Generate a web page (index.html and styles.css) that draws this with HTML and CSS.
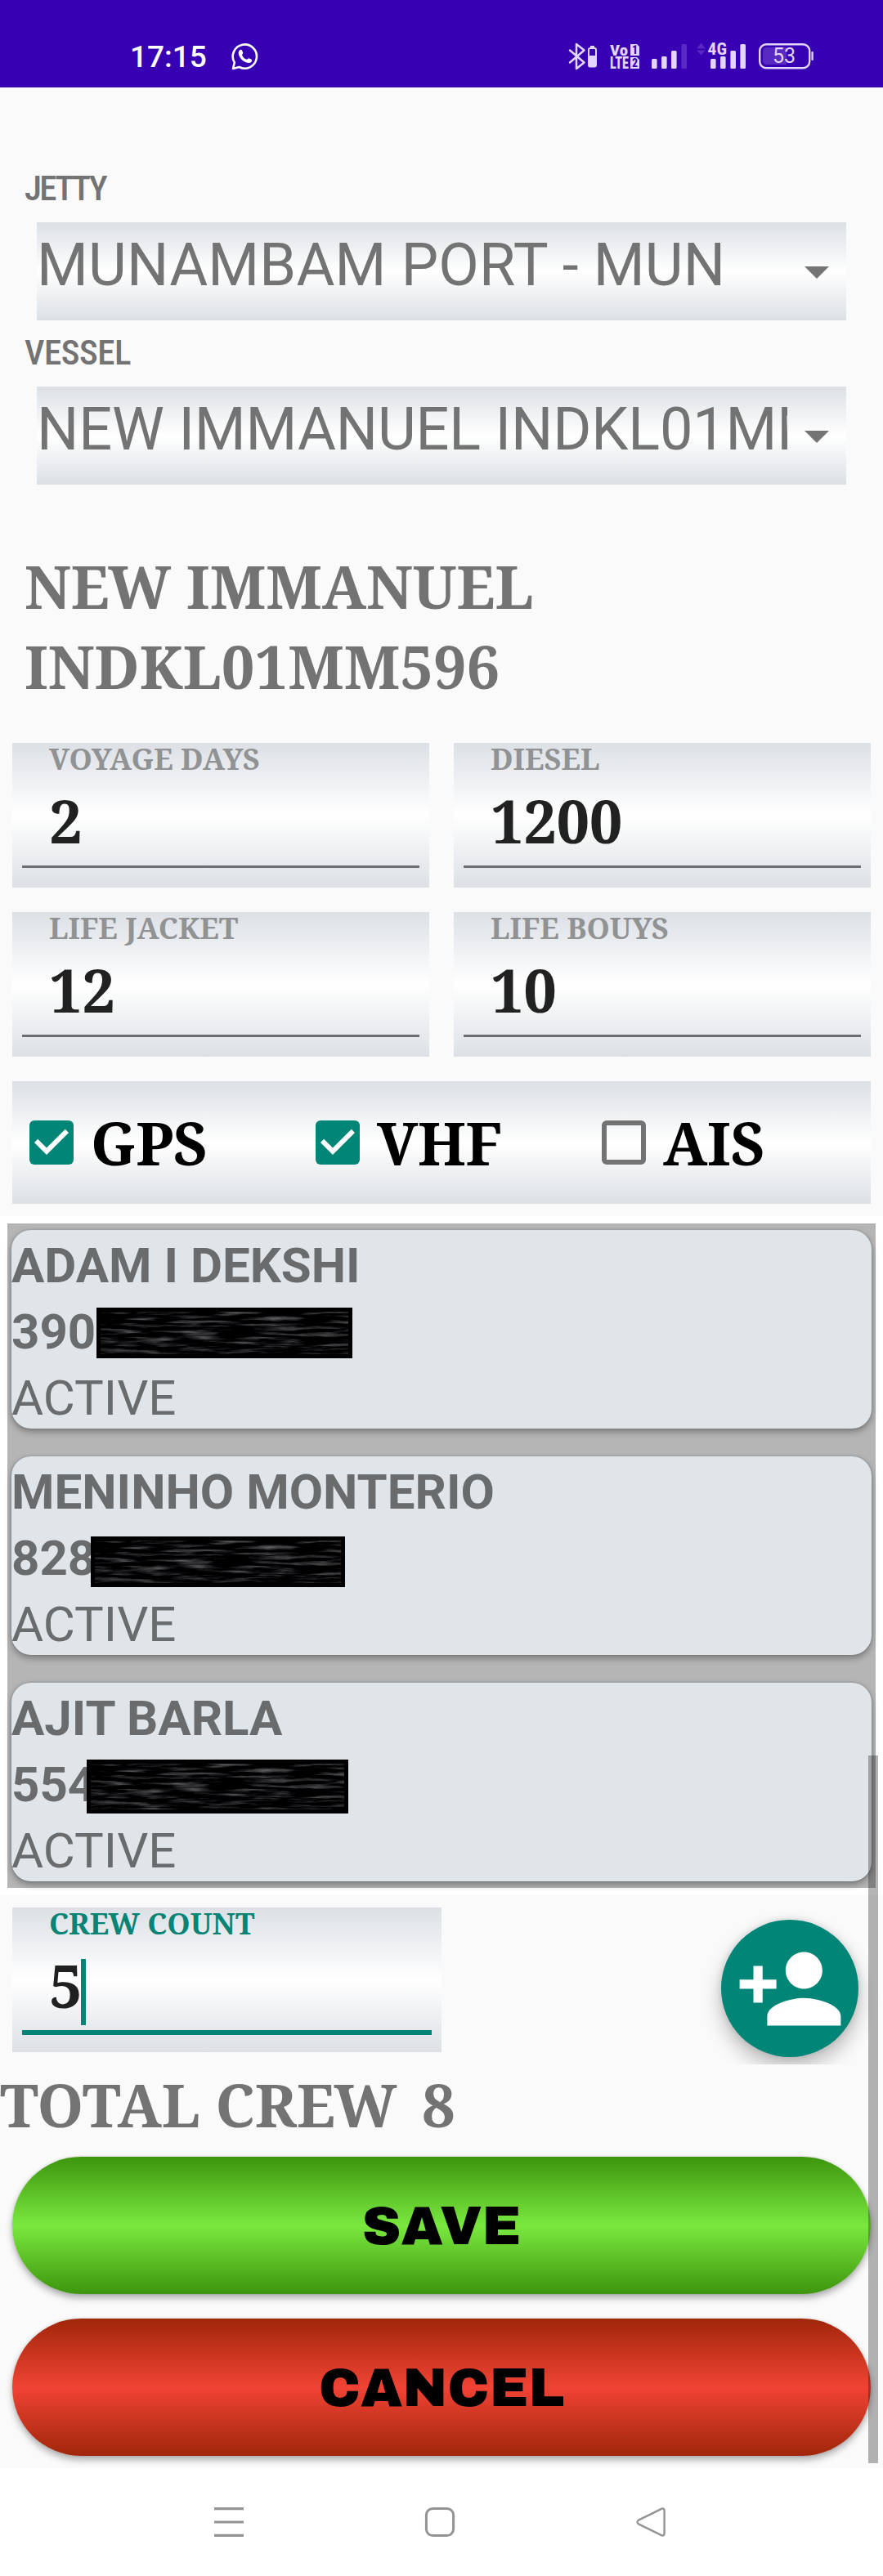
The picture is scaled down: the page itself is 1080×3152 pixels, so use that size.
FILE: index.html
```html
<!DOCTYPE html>
<html lang="en">
<head>
<meta charset="utf-8">
<title>Vessel departure</title>
<link rel="stylesheet" href="styles.css">
</head>
<body>
<header class="status">
  <div class="status-left">
    <span class="clock">17:15</span>
    <svg class="whatsapp" width="34" height="34" viewBox="0 0 34 34">
      <path d="M2 32 L3.8 24.5 A14.6 14.6 0 1 1 9.6 30 Z" fill="none" stroke="#fff" stroke-width="2.6" stroke-linejoin="round"/>
      <path d="M10.2 9.3 C11 8.6 12.6 8.6 13 9.6 L14.2 12.6 C14.5 13.4 13.2 14.6 13 15.2 C14 17.8 16 19.8 18.8 20.8 C19.6 20.6 20.6 19 21.4 19.2 L24.6 20.8 C25.4 21.2 25.2 22.6 24.6 23.4 C23 25.4 20.4 25.4 17.6 24.2 C13.6 22.6 10.6 19.4 9.2 15.8 C8.4 13.4 8.6 10.8 10.2 9.3 Z" fill="#fff"/>
    </svg>
  </div>
  <svg class="status-icons" width="306" height="40" viewBox="692 50 306 40" fill="#e3d5fb">
    <path d="M697 61.5 L714.5 76.5 L705 84 V54 L714.5 61.5 L697 76.5" fill="none" stroke="#e3d5fb" stroke-width="2.5" stroke-linejoin="round" stroke-linecap="round"/>
    <rect x="722" y="56" width="5" height="2"/>
    <rect x="720" y="59" width="9" height="22.5" rx="2" fill="none" stroke="#e3d5fb" stroke-width="2"/>
    <rect x="720" y="68" width="9" height="13"/>
    <g class="volte">
      <text x="746" y="67.6" font-size="19" textLength="22" lengthAdjust="spacingAndGlyphs">Vo</text>
      <text x="746" y="84" font-size="19.5" textLength="23" lengthAdjust="spacingAndGlyphs">LTE</text>
      <path d="M771 54 h8 l3 3 v11 h-11 z M771 70 h8 l3 3 v11 h-11 z"/>
      <text x="776.5" y="66" font-size="14" text-anchor="middle" fill="#3700b3">1</text>
      <text x="776.5" y="82" font-size="14" text-anchor="middle" fill="#3700b3">2</text>
    </g>
    <rect x="797" y="72" width="6.6" height="12" rx="1.5"/>
    <rect x="809" y="69" width="6.6" height="15" rx="1.5"/>
    <rect x="821" y="62" width="6.6" height="22" rx="1.5"/>
    <rect x="833.4" y="54" width="6.6" height="30" rx="1.5" fill="#5829c3"/>
    <path d="M852 59.5 L857.5 52.5 L863 59.5 Z M852 61.5 L857.5 67.5 L863 61.5 Z" fill="#5829c3"/>
    <text class="net" x="865.5" y="67" font-size="20.5" textLength="23.5" lengthAdjust="spacingAndGlyphs">4G</text>
    <rect x="869" y="72" width="6.6" height="12" rx="1.5"/>
    <rect x="881" y="69" width="6.6" height="15" rx="1.5"/>
    <rect x="893.4" y="62" width="6.6" height="22" rx="1.5"/>
    <rect x="905.4" y="54" width="6.6" height="30" rx="1.5"/>
    <path d="M938 58 H962 V79 H938 Q933 79 933 74 V63 Q933 58 938 58 Z" fill="#5829c3"/>
    <rect x="929.2" y="54.2" width="61" height="29" rx="8" fill="none" stroke="#e3d5fb" stroke-width="2.4"/>
    <rect x="992.4" y="63" width="2.4" height="11" rx="1"/>
    <text class="pct" x="959" y="77.2" font-size="25" text-anchor="middle">53</text>
  </svg>
</header>

<main class="form">
  <label class="caption caption-jetty">JETTY</label>
  <div class="spinner">
    <span class="spinner-text">MUNAMBAM PORT - MUN</span>
    <svg class="arrow" width="30" height="15" viewBox="0 0 30 15"><path d="M0 0H30L15 15Z"/></svg>
  </div>
  <label class="caption caption-vessel">VESSEL</label>
  <div class="spinner">
    <span class="spinner-text tight">NEW IMMANUEL INDKL01MM596</span>
    <svg class="arrow" width="30" height="15" viewBox="0 0 30 15"><path d="M0 0H30L15 15Z"/></svg>
  </div>

  <h1 class="title">NEW IMMANUEL<br>INDKL01MM596</h1>

  <section class="fields">
    <div class="field"><div class="label">VOYAGE DAYS</div><div class="value">2</div></div>
    <div class="field"><div class="label">DIESEL</div><div class="value">1200</div></div>
    <div class="field"><div class="label">LIFE JACKET</div><div class="value">12</div></div>
    <div class="field"><div class="label">LIFE BOUYS</div><div class="value">10</div></div>
  </section>

  <section class="checks">
    <div class="check"><svg class="box on" viewBox="3 3 18 18"><path d="M10 17l-5-5 1.41-1.41L10 14.17l7.59-7.59L19 8l-9 9z"/></svg>GPS</div>
    <div class="check"><svg class="box on" viewBox="3 3 18 18"><path d="M10 17l-5-5 1.41-1.41L10 14.17l7.59-7.59L19 8l-9 9z"/></svg>VHF</div>
    <div class="check"><span class="box off"></span>AIS</div>
  </section>

  <section class="list">
    <article class="card">
      <div class="name">ADAM I DEKSHI</div>
      <div class="number">390<svg class="mask mask-a" width="313" height="62"><rect class="streaks" x="5" y="5" width="303" height="52"/></svg></div>
      <div>ACTIVE</div>
    </article>
    <article class="card">
      <div class="name">MENINHO MONTERIO</div>
      <div class="number">828<svg class="mask mask-b" width="311" height="62"><rect class="streaks" x="5" y="5" width="301" height="52"/></svg></div>
      <div>ACTIVE</div>
    </article>
    <article class="card">
      <div class="name">AJIT BARLA</div>
      <div class="number">554<svg class="mask mask-c" width="320" height="66"><rect class="streaks" x="5" y="5" width="310" height="56"/></svg></div>
      <div>ACTIVE</div>
    </article>
  </section>

  <section class="crew">
    <div class="field focused"><div class="label">CREW COUNT</div><div class="value">5<span class="caret"></span></div></div>
    <button class="fab" aria-label="Add crew member">
      <svg width="135" height="135" viewBox="0 0 24 24"><path fill="#fff" d="M15 12c2.21 0 4-1.79 4-4s-1.79-4-4-4-4 1.79-4 4 1.79 4 4 4zm-9-2V7H4v3H1v2h3v3h2v-3h3v-2H6zm9 4c-2.67 0-8 1.34-8 4v2h16v-2c0-2.66-5.33-4-8-4z"/></svg>
    </button>
  </section>

  <div class="total"><span class="total-label">TOTAL CREW</span><span>8</span></div>

  <div class="actions">
    <button class="btn save">SAVE</button>
    <button class="btn cancel">CANCEL</button>
  </div>
  <div class="scrollbar"></div>
</main>

<nav class="nav">
  <svg width="38" height="38" viewBox="0 0 38 38"><path d="M1 2.6H37M1 19H37M1 35.4H37" stroke-width="3.2"/></svg>
  <svg width="38" height="38" viewBox="0 0 38 38"><rect x="2.4" y="2.4" width="33.2" height="33.2" rx="8" stroke-width="3"/></svg>
  <svg width="38" height="38" viewBox="0 0 38 38"><path d="M32.5 2.6 L4 16.6 Q1 19 4 21.4 L32.5 35.4 Q35.6 36 35.6 33 V5 Q35.6 2 32.5 2.6 Z" stroke-width="2.4" stroke-linejoin="round"/></svg>
</nav>

<svg class="defs" width="0" height="0">
  <filter id="streaks" x="0" y="0" width="100%" height="100%" color-interpolation-filters="sRGB">
    <feTurbulence type="fractalNoise" baseFrequency="0.02 0.25" numOctaves="4" seed="4"/>
    <feColorMatrix values="0.9 0 0 0 -0.42  0.9 0 0 0 -0.42  0.9 0 0 0 -0.41  0 0 0 0 1"/>
  </filter>
</svg>
</body>
</html>
```
FILE: styles.css
```css
* { box-sizing: border-box; }

body {
  margin: 0;
  width: 1080px;
  background: #fff;
  font-family: Roboto, "Liberation Sans", sans-serif;
  color: #737373;
}

svg { display: block; flex: none; }

.status {
  display: flex;
  justify-content: space-between;
  height: 107px;
  padding: 50px 82px 0 159px;
  background: #3700b3;
}
.status-left { display: flex; gap: 30px; }
.clock {
  font-size: 37px;
  font-weight: 500;
  line-height: 40px;
  color: #fff;
}
.whatsapp { margin-top: 2px; }
.volte text { font-family: "Roboto Condensed", Roboto, sans-serif; font-weight: 800; }
.net { font-family: "Roboto Condensed", Roboto, sans-serif; font-weight: 700; }
.pct { font-family: Roboto, sans-serif; font-weight: 400; }

.form {
  position: relative;
  height: 2913px;
  padding-top: 99px;
  background: #fafafa;
}

.caption {
  display: block;
  height: 49px;
  padding-left: 30px;
  font-family: "Roboto Condensed", Roboto, sans-serif;
  font-size: 43px;
  font-weight: 500;
  line-height: 48px;
  letter-spacing: -0.5px;
}
.caption-jetty { letter-spacing: -2.6px; }
.caption-vessel { margin-top: 15px; }

.spinner {
  display: flex;
  justify-content: space-between;
  width: 990px;
  height: 120px;
  margin: 17px 45px 0;
  padding: 10px 21px 0 0;
  background: linear-gradient(#dce0e5, #fff 50%, #dce0e5);
}
.spinner-text {
  width: 918px;
  overflow: hidden;
  white-space: nowrap;
  font-size: 72px;
  line-height: 85px;
  letter-spacing: 0.2px;
}
.tight { letter-spacing: -0.15px; }
.arrow { margin-top: 44px; fill: #747474; }

.title, .label, .value, .check, .total {
  font-family: "Noto Serif", "DejaVu Serif Condensed", serif;
  font-weight: 700;
}

.title {
  margin: 75px 30px 0;
  font-size: 72px;
  line-height: 98px;
}

.fields {
  display: grid;
  grid-template-columns: 510px 510px;
  gap: 30px;
  margin: 45px 15px 30px;
}
.field {
  height: 177px;
  padding: 0 12px;
  background: linear-gradient(#dce0e5, #fff 50%, #dce0e5);
}
.label {
  height: 46px;
  padding-left: 33px;
  font-size: 36px;
  line-height: 40px;
  color: #919294;
}
.value {
  position: relative;
  height: 107px;
  padding-left: 33px;
  border-bottom: 3px solid #6b6d70;
  font-size: 72px;
  line-height: 98px;
  letter-spacing: -0.4px;
  color: #212121;
}

.checks {
  display: grid;
  grid-template-columns: repeat(3, 350px);
  height: 150px;
  margin: 0 15px;
  background: linear-gradient(#dce0e5, #fff 50%, #dce0e5);
}
.check {
  display: flex;
  align-items: center;
  gap: 21px;
  padding-left: 21px;
  font-size: 72px;
  line-height: 98px;
  letter-spacing: -0.3px;
  color: #000;
}
.box { width: 54px; height: 54px; border-radius: 6px; }
.on { background: #008577; fill: #fff; }
.off { border: 6px solid #737373; }

.list {
  height: 831px;
  margin-top: 15px;
  padding: 8px 5px 0;
  border: solid #fff;
  border-width: 9px;
  background: #b5b5b5;
}
.card {
  height: 243px;
  margin-bottom: 34px;
  padding-top: 3px;
  border-radius: 24px;
  background: #e0e5e9;
  box-shadow: 0 4px 8px rgba(0, 0, 0, 0.32), 0 0 3px rgba(0, 0, 0, 0.2);
  font-size: 60px;
  line-height: 81px;
  color: #696b6d;
}
.card:last-child { margin-bottom: 0; }
.name, .number { font-weight: 700; }
.number { position: relative; }
.mask { position: absolute; background: #000; }
.mask-a { left: 104px; top: 11px; }
.mask-b { left: 97px; top: 14px; }
.mask-c { left: 92px; top: 10px; }
.streaks { filter: url(#streaks); }

.crew {
  display: flex;
  justify-content: space-between;
  height: 207px;
  padding: 15px 30px 15px 15px;
  overflow: hidden;
}
.focused { width: 525px; }
.focused .label { color: #078476; }
.focused .value { height: 110px; border-bottom: 6px solid #078476; }
.caret {
  position: absolute;
  left: 72px;
  top: 17px;
  width: 6px;
  height: 81px;
  background: #078476;
}
.fab {
  display: flex;
  align-items: center;
  justify-content: center;
  width: 168px;
  height: 168px;
  margin-top: 15px;
  padding: 0;
  border: 0;
  border-radius: 50%;
  background: #008577;
  box-shadow: 0 12px 24px rgba(0, 0, 0, 0.26), 0 0 8px rgba(0, 0, 0, 0.12);
}

.total {
  display: flex;
  font-size: 72px;
  line-height: 98px;
}
.total-label { width: 516px; }

.actions {
  display: flex;
  flex-direction: column;
  gap: 30px;
  padding: 15px 15px;
  height: 396px;
  overflow: hidden;
}
.btn {
  flex: none;
  height: 168px;
  padding: 1px 0 0;
  border: 0;
  border-radius: 84px;
  font-family: "Archivo Black", Inter, sans-serif;
  font-size: 66px;
  color: #000;
  box-shadow: 0 5px 9px rgba(0, 0, 0, 0.3), 0 0 3px rgba(0, 0, 0, 0.15);
}
.save { background: linear-gradient(#3d950d, #7ae83f 50%, #3d950d); }
.cancel { background: linear-gradient(#a0260a, #f04334 50%, #a0260a); }

/* Scroll indicator floating over the form's right edge */
.scrollbar {
  position: absolute;
  right: 6px;
  top: 2041px;
  width: 12px;
  height: 866px;
  background: rgba(0, 0, 0, 0.29);
}

.nav {
  display: flex;
  align-items: flex-start;
  gap: 220px;
  height: 132px;
  padding: 47px 0 0 261px;
  fill: none;
  stroke: #939393;
}

.defs { position: absolute; }
```
